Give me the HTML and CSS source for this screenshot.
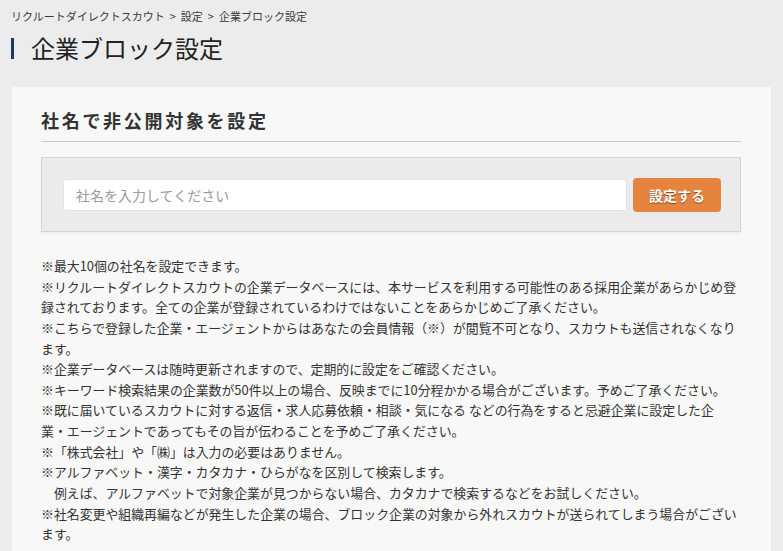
FILE: index.html
```html
<!DOCTYPE html>
<html lang="ja">
<head>
<meta charset="utf-8">
<title>企業ブロック設定</title>
<link rel="stylesheet" href="styles.css">
</head>
<body>
<nav class="breadcrumb">
  <span>リクルートダイレクトスカウト</span><span class="sep">&gt;</span><span>設定</span><span class="sep">&gt;</span><span>企業ブロック設定</span>
</nav>
<h1 class="page-title">企業ブロック設定</h1>
<main class="card">
  <h2 class="section-title">社名で非公開対象を設定</h2>
  <form class="block-form">
    <input class="company-input" type="text" placeholder="社名を入力してください">
    <button class="submit-btn" type="button">設定する</button>
  </form>
  <div class="notes">
    <p>※最大10個の社名を設定できます。</p>
    <p>※リクルートダイレクトスカウトの企業データベースには、本サービスを利用する可能性のある採用企業があらかじめ登録されております。全ての企業が登録されているわけではないことをあらかじめご了承ください。</p>
    <p>※こちらで登録した企業・エージェントからはあなたの会員情報（※）が閲覧不可となり、スカウトも送信されなくなります。</p>
    <p>※企業データベースは随時更新されますので、定期的に設定をご確認ください。</p>
    <p>※キーワード検索結果の企業数が50件以上の場合、反映までに10分程かかる場合がございます。予めご了承ください。</p>
    <p>※既に届いているスカウトに対する返信・求人応募依頼・相談・気になる などの行為をすると忌避企業に設定した企<br>業・エージェントであってもその旨が伝わることを予めご了承ください。</p>
    <p>※「株式会社」や「㈱」は入力の必要はありません。</p>
    <p>※アルファベット・漢字・カタカナ・ひらがなを区別して検索します。</p>
    <p>　例えば、アルファベットで対象企業が見つからない場合、カタカナで検索するなどをお試しください。</p>
    <p>※社名変更や組織再編などが発生した企業の場合、ブロック企業の対象から外れスカウトが送られてしまう場合がございます。</p>
  </div>
</main>
</body>
</html>
```

FILE: styles.css
```css
* {
  box-sizing: border-box;
}

html, body {
  margin: 0;
  padding: 0;
}

body {
  background: #ececec;
  font-family: "Noto Sans CJK JP", "Noto Sans", sans-serif;
  color: #333;
}

.breadcrumb {
  padding: 9px 11px 0;
  font-size: 11px;
  line-height: 14px;
  color: #3a3a3a;
  white-space: nowrap;
}

.breadcrumb .sep {
  margin: 0 5px;
}

.page-title {
  display: flex;
  align-items: center;
  margin: 10px 0 0 11px;
  font-size: 24px;
  line-height: 30px;
  font-weight: normal;
  color: #222;
}

.page-title::before {
  content: "";
  display: block;
  width: 3px;
  height: 21px;
  margin-right: 17px;
  background: #1f3864;
}

.card {
  margin: 24px 12px 0;
  padding: 20px 30px 10px 29px;
  background: #f8f8f8;
  min-height: 480px;
}

.section-title {
  margin: 0;
  padding-bottom: 8px;
  border-bottom: 1px solid #cacaca;
  font-size: 18px;
  line-height: 26px;
  font-weight: bold;
  letter-spacing: 2.7px;
  color: #333;
}

.block-form {
  display: flex;
  align-items: center;
  gap: 6px;
  margin: 15px 0 0;
  padding: 20px 19px 19px 21px;
  background: #ebebeb;
  border: 1px solid #d6d6d6;
  box-shadow: 0 2px 2px rgba(0, 0, 0, 0.04);
}

.company-input {
  flex: 1;
  height: 32px;
  margin: 0;
  padding: 0 12px;
  border: 1px solid #e3e3e3;
  border-radius: 3px;
  background: #fff;
  font-family: inherit;
  font-size: 14px;
  color: #333;
  outline: none;
}

.company-input::placeholder {
  color: #9a9a9a;
}

.submit-btn {
  width: 88px;
  height: 34px;
  margin: 0;
  padding: 0;
  border: none;
  border-radius: 4px;
  background: #e5843f;
  font-family: inherit;
  font-size: 14px;
  font-weight: bold;
  color: #fff;
  text-shadow: 0 1px 1px rgba(0, 0, 0, 0.45);
  cursor: pointer;
}

.notes {
  margin-top: 24px;
  font-size: 12.9px;
  line-height: 1.6;
  color: #333;
}

.notes p {
  margin: 0;
}
```
